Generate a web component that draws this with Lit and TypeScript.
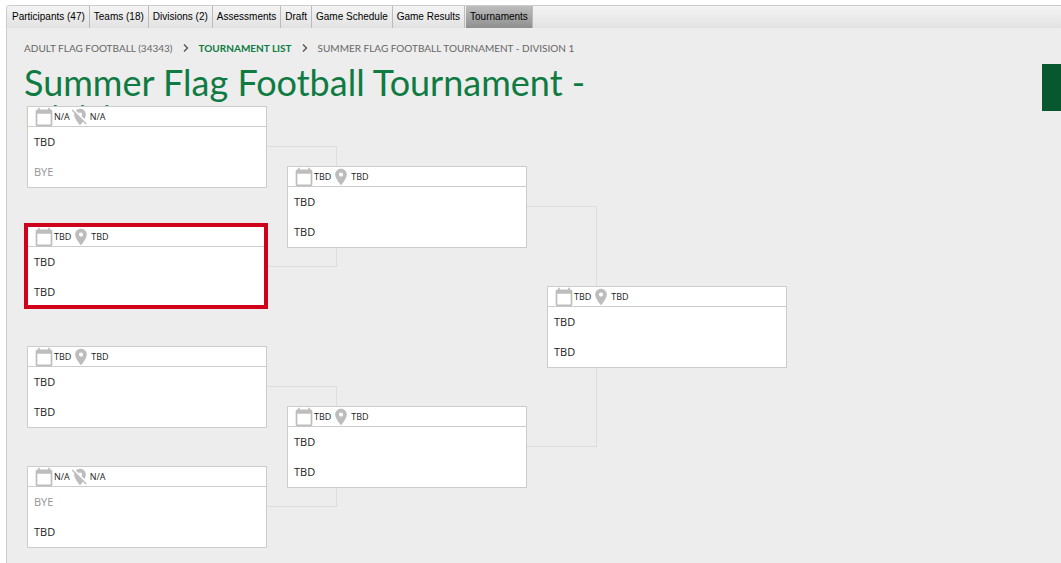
import { LitElement, html, css, svg } from "lit";
import { customElement, property } from "lit/decorators.js";
import { classMap } from "lit/directives/class-map.js";

interface Match {
  when: string;
  where: string;
  teams: [string, string];
  highlighted?: boolean;
}

const TABS = [
  "Participants (47)",
  "Teams (18)",
  "Divisions (2)",
  "Assessments",
  "Draft",
  "Game Schedule",
  "Game Results",
  "Tournaments",
];
const ACTIVE_TAB = "Tournaments";

const open: Match = { when: "TBD", where: "TBD", teams: ["TBD", "TBD"] };

// Each round is a list of groups; a group's matches feed one match of the next round.
const ROUNDS: Match[][][] = [
  [
    [
      { when: "N/A", where: "N/A", teams: ["TBD", "BYE"] },
      { ...open, highlighted: true },
    ],
    [open, { when: "N/A", where: "N/A", teams: ["BYE", "TBD"] }],
  ],
  [[open, open]],
  [[open]],
];

const CALENDAR = svg`<path d="M20 3h-1V1h-2v2H7V1H5v2H4c-1.1 0-2 .9-2 2v16c0 1.1.9 2 2 2h16c1.1 0 2-.9 2-2V5c0-1.1-.9-2-2-2zm0 18H4V8h16v13z"/>`;
const PLACE = svg`<path d="M12 2C8.13 2 5 5.13 5 9c0 5.25 7 13 7 13s7-7.75 7-13c0-3.87-3.13-7-7-7zm0 9.5c-1.38 0-2.5-1.12-2.5-2.5s1.12-2.5 2.5-2.5 2.5 1.12 2.5 2.5-1.12 2.5-2.5 2.5z"/>`;
const PLACE_OFF = svg`<path d="M12 6.5c1.38 0 2.5 1.12 2.5 2.5 0 .74-.33 1.39-.83 1.85l3.63 3.63c.98-1.86 1.7-3.8 1.7-5.48 0-3.87-3.13-7-7-7-1.98 0-3.76.83-5.04 2.15l3.19 3.19c.46-.52 1.11-.84 1.85-.84zm4.37 9.6l-4.63-4.63-.11-.11L3.27 3 2 4.27l3.18 3.18C5.07 7.95 5 8.47 5 9c0 5.25 7 13 7 13s1.67-1.85 3.38-4.35L18.73 21 20 19.73l-3.63-3.63z"/>`;

@customElement("match-card")
export class MatchCard extends LitElement {
  @property({ attribute: false }) match: Match = open;

  static styles = css`
    :host {
      display: block;
      position: relative;
      box-sizing: border-box;
      border: 1px solid #ccc;
      background: #fff;
      color: #1a1a1a;
      font-family: "Open Sans", "Noto Sans", sans-serif;
    }
    .info {
      display: flex;
      align-items: center;
      height: 19px;
      padding-left: 6px;
      border-bottom: 1px solid #ccc;
      font-size: 9px;
      line-height: 19px;
    }
    .icon {
      flex: none;
      width: 20px;
      height: 20px;
      fill: #bdbdbd;
    }
    .team {
      padding: 0 6px;
      font-size: 11px;
      line-height: 30px;
    }
    .bye {
      color: #949494;
    }
    .frame {
      position: absolute;
      inset: -4px -2px -2px -4px;
      border: 4px solid #d0021b;
      pointer-events: none;
    }
  `;

  render() {
    const { when, where, teams, highlighted } = this.match;
    return html`
      <div class="info">
        <svg class="icon" viewBox="0 0 24 24" aria-hidden="true">${CALENDAR}</svg>
        <span>${when}</span>
        <svg class="icon" viewBox="0 0 24 24" aria-hidden="true">
          ${where === "N/A" ? PLACE_OFF : PLACE}
        </svg>
        <span>${where}</span>
      </div>
      ${teams.map(
        (team) => html`<div class=${classMap({ team: true, bye: team === "BYE" })}>${team}</div>`
      )}
      ${highlighted ? html`<div class="frame"></div>` : null}
    `;
  }
}

@customElement("app-root")
export class AppRoot extends LitElement {
  static styles = css`
    :host {
      display: block;
      box-sizing: border-box;
      min-height: 100vh;
      padding: 5px 0 0 6px;
      background: #fff;
      font-family: Lato, sans-serif;
      overflow: hidden;
    }
    .panel {
      box-sizing: border-box;
      min-height: calc(100vh - 5px);
      border: solid #ccc;
      border-width: 1px 0 0 1px;
      border-top-left-radius: 4px;
      background: #ededed;
      overflow: hidden;
    }
    .tabs {
      display: flex;
      height: 22px;
      padding-left: 1px;
      background: linear-gradient(#f4f4f4, #e2e2e2);
    }
    .tab {
      padding: 0 4px;
      border-right: 1px solid #bbb;
      color: #000;
      font-family: "Liberation Sans", Arial, sans-serif;
      font-size: 10px;
      line-height: 22px;
      text-decoration: none;
      white-space: nowrap;
    }
    .active {
      margin-left: 1px;
      background: linear-gradient(#bdbdbd, #8f8f8f);
    }
    .crumbs {
      display: flex;
      align-items: center;
      gap: 9px;
      padding: 10px 17px 6px;
      color: #666;
      font-size: 10px;
      line-height: 20px;
      text-transform: uppercase;
      white-space: nowrap;
    }
    .crumbs a {
      color: inherit;
      text-decoration: none;
    }
    .crumbs .current {
      color: #0f7b43;
      font-weight: 700;
    }
    .chevron {
      width: 8px;
      height: 8px;
      fill: none;
      stroke: #555;
      stroke-width: 1.4;
    }
    .heading {
      display: flex;
      align-items: flex-start;
      justify-content: space-between;
      margin-right: -60px;
      padding-left: 17px;
    }
    h1 {
      max-width: 600px;
      margin: 0;
      color: #0f7b43;
      font-size: 36px;
      font-weight: 400;
      line-height: 36px;
    }
    .action {
      flex: none;
      width: 79px;
      height: 47px;
      border: 0;
      background: #07572f;
    }
    .bracket {
      display: flex;
      gap: 20px;
      position: relative;
      margin-top: -49px;
      padding-left: 20px;
    }
    .round {
      display: flex;
      flex-direction: column;
      flex: none;
      width: 240px;
      min-height: 480px;
    }
    .group {
      display: flex;
      flex: 1;
      flex-direction: column;
      justify-content: space-around;
      position: relative;
    }
    .link {
      position: absolute;
      top: calc(25% - 1px);
      bottom: 25%;
      left: 100%;
      width: 69px;
      border: solid #ddd;
      border-width: 1px 1px 1px 0;
    }
    match-card {
      z-index: 1;
    }
  `;

  render() {
    const chevron = html`<svg class="chevron" viewBox="0 0 8 8" aria-hidden="true">
      <path d="M2 0.5 5.5 4 2 7.5" />
    </svg>`;
    return html`
      <div class="panel">
        <nav class="tabs">
          ${TABS.map(
            (tab) => html`<a href="#" class=${classMap({ tab: true, active: tab === ACTIVE_TAB })}>${tab}</a>`
          )}
        </nav>
        <nav class="crumbs" aria-label="Breadcrumb">
          <a href="#">Adult Flag Football (34343)</a>
          ${chevron}
          <a href="#" class="current">Tournament List</a>
          ${chevron}
          <span>Summer Flag Football Tournament - Division 1</span>
        </nav>
        <header class="heading">
          <h1>Summer Flag Football Tournament - Division 1</h1>
          <button class="action" type="button" aria-label="Actions"></button>
        </header>
        <main class="bracket">
          ${ROUNDS.map(
            (round) => html`<section class="round">
              ${round.map(
                (group) => html`<div class="group">
                  ${group.length > 1 ? html`<div class="link"></div>` : null}
                  ${group.map((m) => html`<match-card .match=${m}></match-card>`)}
                </div>`
              )}
            </section>`
          )}
        </main>
      </div>
    `;
  }
}
